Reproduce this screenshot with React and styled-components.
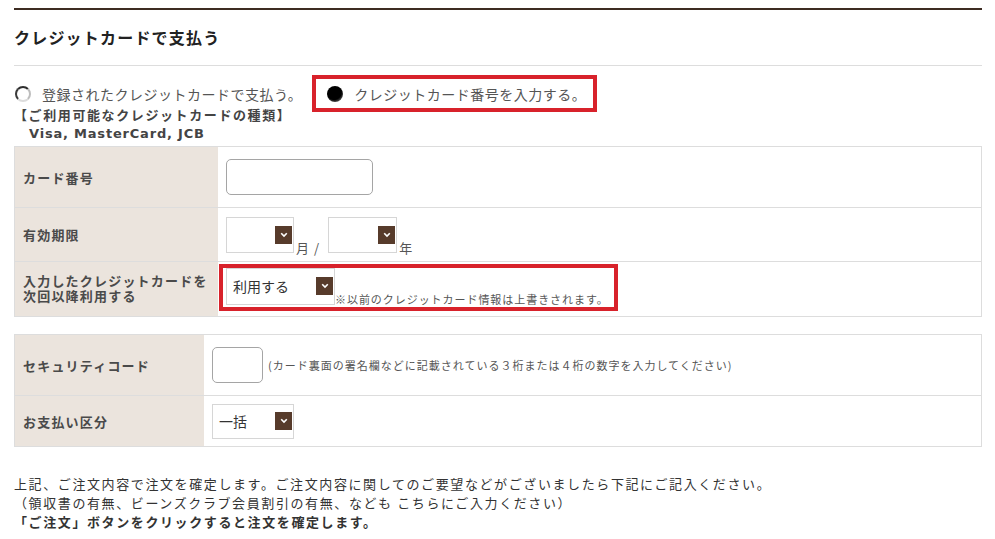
import React from "react";
import styled, { createGlobalStyle } from "styled-components";

const GlobalStyle = createGlobalStyle`
  body {
    margin: 0;
    background: #fff;
    color: #555;
    font-family: "Noto Sans CJK JP", "DejaVu Sans", sans-serif;
  }
`;

function Chevron() {
  return (
    <svg width="8" height="6" viewBox="0 0 8 6">
      <path d="M1.2 1.2 L4 4 L6.8 1.2" fill="none" stroke="#fff" strokeWidth="1.6" />
    </svg>
  );
}

function SelectBox({ width, height, value }) {
  return (
    <Select $w={width} $h={height}>
      <SelectText>{value}</SelectText>
      <ArrowBox>
        <Chevron />
      </ArrowBox>
    </Select>
  );
}

function App() {
  return (
    <>
      <GlobalStyle />
      <Page>
        <TopRule />
        <Heading>クレジットカードで支払う</Heading>

        <RadioRow>
          <RadioOption>
            <RadioMark />
            <span>登録されたクレジットカードで支払う。</span>
          </RadioOption>
          <Highlight $inset="-9px -11px -8px -15px">
            <RadioOption>
              <RadioMark $checked />
              <span>クレジットカード番号を入力する。</span>
            </RadioOption>
          </Highlight>
        </RadioRow>
        <CardTypes>【ご利用可能なクレジットカードの種類】</CardTypes>
        <CardBrands>Visa, MasterCard, JCB</CardBrands>

        <Table $top={3}>
          <Row $label={203} $h={60}>
            <Label>カード番号</Label>
            <Value>
              <TextInput $w={147} />
            </Value>
          </Row>
          <Row $label={203} $h={53}>
            <Label>有効期限</Label>
            <Value>
              <Expiry>
                <SelectBox width={68} height={36} value="" />
                <Unit>月</Unit>
                <Slash>/</Slash>
                <SelectBox width={69} height={36} value="" />
                <Unit>年</Unit>
              </Expiry>
            </Value>
          </Row>
          <Row $label={203} $h={54}>
            <Label>
              <LabelLines>
                <span>入力したクレジットカードを</span>
                <span>次回以降利用する</span>
              </LabelLines>
            </Label>
            <Value>
              <Highlight $inset="-4px -9px -6px -7px" $shift={6}>
                <Expiry>
                  <SelectBox width={109} height={37} value="利用する" />
                  <Note>※以前のクレジットカード情報は上書きされます。</Note>
                </Expiry>
              </Highlight>
            </Value>
          </Row>
        </Table>

        <Table $top={17}>
          <Row $label={189} $h={60}>
            <Label>セキュリティコード</Label>
            <Value>
              <TextInput $w={51} />
              <Hint>(カード裏面の署名欄などに記載されている３桁または４桁の数字を入力してください)</Hint>
            </Value>
          </Row>
          <Row $label={189} $h={50}>
            <Label>お支払い区分</Label>
            <Value>
              <SelectBox width={82} height={35} value="一括" />
            </Value>
          </Row>
        </Table>

        <Footer>
          <p>上記、ご注文内容で注文を確定します。ご注文内容に関してのご要望などがございましたら下記にご記入ください。</p>
          <p>（領収書の有無、ビーンズクラブ会員割引の有無、なども こちらにご入力ください）</p>
          <p><strong>「ご注文」ボタンをクリックすると注文を確定します。</strong></p>
        </Footer>
      </Page>
    </>
  );
}

const Page = styled.div`
  width: 968px;
  padding: 8px 0 0 14px;
`;

const TopRule = styled.div`
  height: 2px;
  background: #3d2c22;
`;

const Heading = styled.h2`
  margin: 0;
  padding: 17px 0 18px;
  border-bottom: 1px solid #ddd;
  color: #222;
  font-size: 16px;
  font-weight: 700;
  line-height: 20px;
  letter-spacing: 1.2px;
`;

const RadioRow = styled.div`
  display: flex;
  align-items: center;
  gap: 25px;
  margin-top: 18px;
  padding-left: 1px;
  height: 20px;
`;

const RadioOption = styled.label`
  display: flex;
  align-items: center;
  gap: 11px;
  font-size: 14px;
  line-height: 20px;
  letter-spacing: 0.5px;
  color: #555;
`;

const RadioMark = styled.span`
  width: 16px;
  height: 16px;
  box-sizing: border-box;
  border-radius: 50%;
  flex: none;
  ${(p) =>
    p.$checked
      ? `background: radial-gradient(circle at 45% 40%, #000 55%, #333 68%, #9a9a9a 100%);`
      : `border: 2px solid; border-color: #2e2e2e #bdbdbd #dcdcdc #3a3a3a; background: radial-gradient(circle at 60% 60%, #fff 60%, #ececec 100%);`}
`;

const Highlight = styled.div`
  position: relative;
  margin-bottom: ${(p) => p.$shift || 0}px;
  &::after {
    content: "";
    position: absolute;
    inset: ${(p) => p.$inset};
    border: 4px solid #d8222b;
    pointer-events: none;
  }
`;

const CardTypes = styled.div`
  margin-top: 1px;
  color: #444;
  font-size: 13px;
  font-weight: 700;
  line-height: 19px;
  letter-spacing: 1.6px;
`;

const CardBrands = styled.div`
  padding-left: 15px;
  color: #444;
  font-family: "DejaVu Sans", sans-serif;
  font-size: 13px;
  font-weight: 700;
  line-height: 19px;
  letter-spacing: 0.8px;
`;

const Table = styled.div`
  margin-top: ${(p) => p.$top}px;
  border: 1px solid #ddd;
`;

const Row = styled.div`
  display: grid;
  grid-template-columns: ${(p) => p.$label}px 1fr;
  height: ${(p) => p.$h}px;
  & + & {
    border-top: 1px solid #ddd;
  }
`;

const Label = styled.div`
  display: flex;
  align-items: center;
  padding-left: 8px;
  background: #ebe4dd;
  color: #4a4a4a;
  font-size: 13px;
  font-weight: 700;
  line-height: 15px;
  letter-spacing: 1.2px;
`;

const LabelLines = styled.div`
  display: flex;
  flex-direction: column;
  font-family: "DejaVu Sans", "Noto Sans CJK JP", sans-serif;
  line-height: 15px;
`;

const Value = styled.div`
  display: flex;
  align-items: center;
  padding-left: 8px;
`;

const TextInput = styled.input`
  width: ${(p) => p.$w}px;
  height: 36px;
  box-sizing: border-box;
  border: 1px solid #a5a5a5;
  border-radius: 5px;
  background: #fff;
`;

const Select = styled.div`
  display: flex;
  align-items: center;
  justify-content: space-between;
  box-sizing: border-box;
  width: ${(p) => p.$w}px;
  height: ${(p) => p.$h}px;
  padding: 0 1px 0 6px;
  border: 1px solid #d6d6d6;
  background: #fff;
`;

const SelectText = styled.span`
  color: #333;
  font-size: 14px;
  line-height: 1;
`;

const ArrowBox = styled.span`
  display: flex;
  align-items: center;
  justify-content: center;
  width: 17px;
  height: 18px;
  background: #573b2b;
`;

const Expiry = styled.div`
  display: flex;
  align-items: flex-end;
`;

const Unit = styled.span`
  margin-left: 2px;
  margin-bottom: -1px;
  color: #555;
  font-size: 13px;
  line-height: 1;
`;

const Slash = styled.span`
  margin: 0 9px -1px 5px;
  color: #555;
  font-size: 13px;
  line-height: 1;
`;

const Note = styled.span`
  color: #555;
  font-size: 11px;
  line-height: 13px;
  letter-spacing: 0.95px;
  margin-bottom: -1px;
`;

const Hint = styled.span`
  margin-left: 5px;
  color: #555;
  font-size: 11px;
  line-height: 14px;
  letter-spacing: 1px;
`;

const Footer = styled.div`
  margin-top: 27px;
  color: #333;
  font-size: 13px;
  line-height: 19px;
  letter-spacing: 1.6px;
  p {
    margin: 0;
  }
  strong {
    font-weight: 700;
  }
`;

export default App;
